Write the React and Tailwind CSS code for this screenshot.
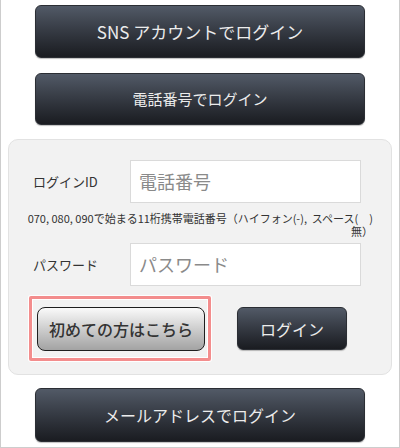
import React from "react";

const font = { fontFamily: '"Noto Sans CJK JP", "Noto Sans", sans-serif' };

function DarkButton({ children, className }) {
  return (
    <button
      className={
        "flex items-center justify-center rounded-[6px] border border-[#2b2e34] bg-linear-to-b from-[#525a67] to-[#1a1c21] text-[#ececec] shadow-[0_1px_1px_rgba(0,0,0,0.25)] " +
        className
      }
    >
      {children}
    </button>
  );
}

export default function App() {
  return (
    <div
      className="flex h-[448px] w-[400px] flex-col border-x border-b border-[#cdcdcd] bg-white"
      style={font}
    >
      <DarkButton className="mx-[34px] mt-[5px] h-[53px] shrink-0 text-[17px]">
        SNS アカウントでログイン
      </DarkButton>
      <DarkButton className="mx-[34px] mt-[15px] h-[52px] shrink-0 text-[15px]">
        電話番号でログイン
      </DarkButton>

      <div className="mx-[7px] mt-[14px] shrink-0 rounded-[10px] border border-[#e2e2e2] bg-[#f2f2f2] pt-[20px] pb-[12px]">
        <div className="flex h-[43px] items-center">
          <div className="w-[121px] pl-[24px] text-[13px] text-[#333]">ログインID</div>
          <div className="flex h-[43px] w-[231px] items-center border border-[#dadada] bg-white pl-[8px] text-[18px] text-[#8a8a8a]">
            電話番号
          </div>
        </div>
        <div className="mt-[9px] pr-[18px] text-right text-[11px] leading-[13px] text-[#333]">
          <div className="whitespace-nowrap">
            070, 080, 090で始まる11桁携帯電話番号（ハイフォン(-),&nbsp;&nbsp;スペース(　)
          </div>
          <div>無）</div>
        </div>
        <div className="mt-[5px] flex h-[43px] items-center">
          <div className="w-[121px] pl-[24px] text-[13px] text-[#333]">パスワード</div>
          <div className="flex h-[43px] w-[231px] items-center border border-[#dadada] bg-white pl-[8px] text-[18px] text-[#8a8a8a]">
            パスワード
          </div>
        </div>
        <div className="mt-[9px] flex items-center">
          <div className="ml-[19px] h-[67px] w-[184px] rounded-[3px] bg-white p-px">
            <div className="h-full rounded-[2px] border-[3px] border-[#f38d8d]">
              <div className="flex h-full items-center border border-white bg-[#f2f2f2] pl-[4px]">
                <button className="flex h-[44px] w-[168px] items-center justify-center rounded-[8px] border border-[#1e1e1e] bg-linear-to-b from-[#fafafa] to-[#a3a3a3] text-[16px] font-medium text-[#333]">
                  初めての方はこちら
                </button>
              </div>
            </div>
          </div>
          <DarkButton className="ml-[25px] h-[43px] w-[110px] text-[16px]">
            ログイン
          </DarkButton>
        </div>
      </div>

      <DarkButton className="mx-[34px] mt-[13px] h-[54px] shrink-0 text-[16px]">
        メールアドレスでログイン
      </DarkButton>
    </div>
  );
}
